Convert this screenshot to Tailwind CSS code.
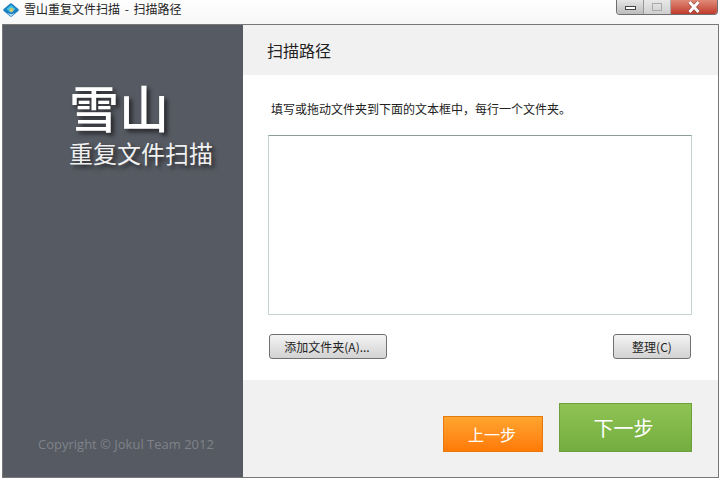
<!DOCTYPE html>
<html lang="zh-CN">
<head>
    <meta charset="UTF-8">
    <title>雪山重复文件扫描 - 扫描路径</title>
    <script src="https://cdn.jsdelivr.net/npm/@tailwindcss/browser@4"></script>
</head>
<body class="w-[720px] h-[480px] overflow-hidden bg-white font-['Noto_Sans_CJK_SC','Noto_Sans',sans-serif] text-[#222]">
    <!-- Title bar -->
    <div class="h-6 flex items-start justify-between pl-[3px] pr-[2px] bg-gradient-to-b from-white to-[#f6f6f6]">
        <div class="flex items-center gap-[5px] h-[18px]">
            <svg width="16" height="14" viewBox="0 0 16 14" class="mt-[2px]">
                <path d="M8 1.5 L14.5 7 L8 12.5 L1.5 7 Z" fill="#1b7fc0" stroke="#1b7fc0" stroke-width="2.5" stroke-linejoin="round"/>
                <path d="M8 2 L12.5 6 L8 10 L3.5 6 Z" fill="#46c3e4"/>
                <circle cx="8.5" cy="7" r="2" fill="#d9c765"/>
                <path d="M4 10 L8 13 L12 10 L8 11.5 Z" fill="#e8f4f8"/>
            </svg>
            <span class="text-xs leading-none [word-spacing:2px]">雪山重复文件扫描 - 扫描路径</span>
        </div>
        <!-- Window controls -->
        <div class="flex h-[15px] w-[102px] rounded-b-[4px] border border-t-0 border-[#6f6f6f] overflow-hidden">
            <div class="w-[27px] flex items-center justify-center border-r border-[#999] bg-gradient-to-b from-[#e6e6e6] to-[#bcbcbc]">
                <div class="w-[11px] h-[4px] border border-[#444] bg-white mt-[2px]"></div>
            </div>
            <div class="w-[27px] flex items-center justify-center border-r border-[#aaa] bg-gradient-to-b from-[#e8e8e8] to-[#cfcfcf]">
                <div class="w-[10px] h-[8px] border border-[#aaa]"></div>
            </div>
            <div class="flex-1 flex items-center justify-center bg-gradient-to-b from-[#e08a78] to-[#c0392b]">
                <svg width="14" height="12" viewBox="0 0 14 12">
                    <path d="M2.5 1 L11.5 11 M11.5 1 L2.5 11" stroke="#5a2018" stroke-opacity="0.5" stroke-width="4.2"/>
                    <path d="M2.5 1 L11.5 11 M11.5 1 L2.5 11" stroke="#fff" stroke-width="3"/>
                </svg>
            </div>
        </div>
    </div>

    <!-- Window body -->
    <div class="mx-[2px] h-[454px] w-[717px] border border-[#777] flex">
        <!-- Sidebar -->
        <aside class="w-[240px] shrink-0 bg-[#565a62] flex flex-col pt-[56px] pb-[24px]">
            <div class="pl-[66px] text-white text-[50px] font-medium leading-[60px] font-['Liberation_Sans','Noto_Sans_CJK_SC',sans-serif] [text-shadow:3px_3px_4px_rgba(0,0,0,0.6)]">雪山</div>
            <div class="pl-[66px] text-[#f0f0f0] text-2xl leading-[30px] -mt-px font-['Liberation_Sans','Noto_Sans_CJK_SC',sans-serif] [text-shadow:3px_3px_4px_rgba(0,0,0,0.6)]">重复文件扫描</div>
            <div class="mt-auto pl-[35px] text-[#7f8389] text-[13px] leading-[18px] font-['Open_Sans',sans-serif]">Copyright © Jokul Team 2012</div>
        </aside>

        <!-- Content -->
        <main class="flex-1 flex flex-col bg-white">
            <header class="h-[50px] bg-[#f1f1f1] flex items-center pl-6 text-base">扫描路径</header>
            <section class="h-[305px] px-[25px] flex flex-col">
                <p class="pl-[3px] pt-[25px] text-xs leading-[18px]">填写或拖动文件夹到下面的文本框中，每行一个文件夹。</p>
                <textarea class="mt-[17px] w-[424px] h-[180px] border border-[#c6d2cf] border-t-[#8c9c9a] outline-none resize-none"></textarea>
                <div class="mt-[19px] w-[424px] pl-px pr-px flex justify-between">
                    <button class="w-[118px] h-[25px] pr-[2px] rounded-[3px] border border-[#707070] bg-gradient-to-b from-[#f4f4f4] to-[#d2d2d2] text-xs">添加文件夹(A)...</button>
                    <button class="w-[78px] h-[25px] rounded-[3px] border border-[#707070] bg-gradient-to-b from-[#f4f4f4] to-[#d2d2d2] text-xs">整理(C)</button>
                </div>
            </section>
            <footer class="flex-1 bg-[#f1f1f1] flex items-end justify-end gap-4 pr-[26px] pb-[25px]">
                <button class="w-[100px] h-9 pr-[2px] border border-[#e8790f] bg-gradient-to-b from-[#ffa42e] to-[#ff7a05] text-white text-base">上一步</button>
                <button class="w-[133px] h-[49px] pr-[4px] border border-[#6f9f3d] bg-gradient-to-b from-[#8fc454] to-[#74ad3f] text-white text-xl">下一步</button>
            </footer>
        </main>
    </div>
</body>
</html>
